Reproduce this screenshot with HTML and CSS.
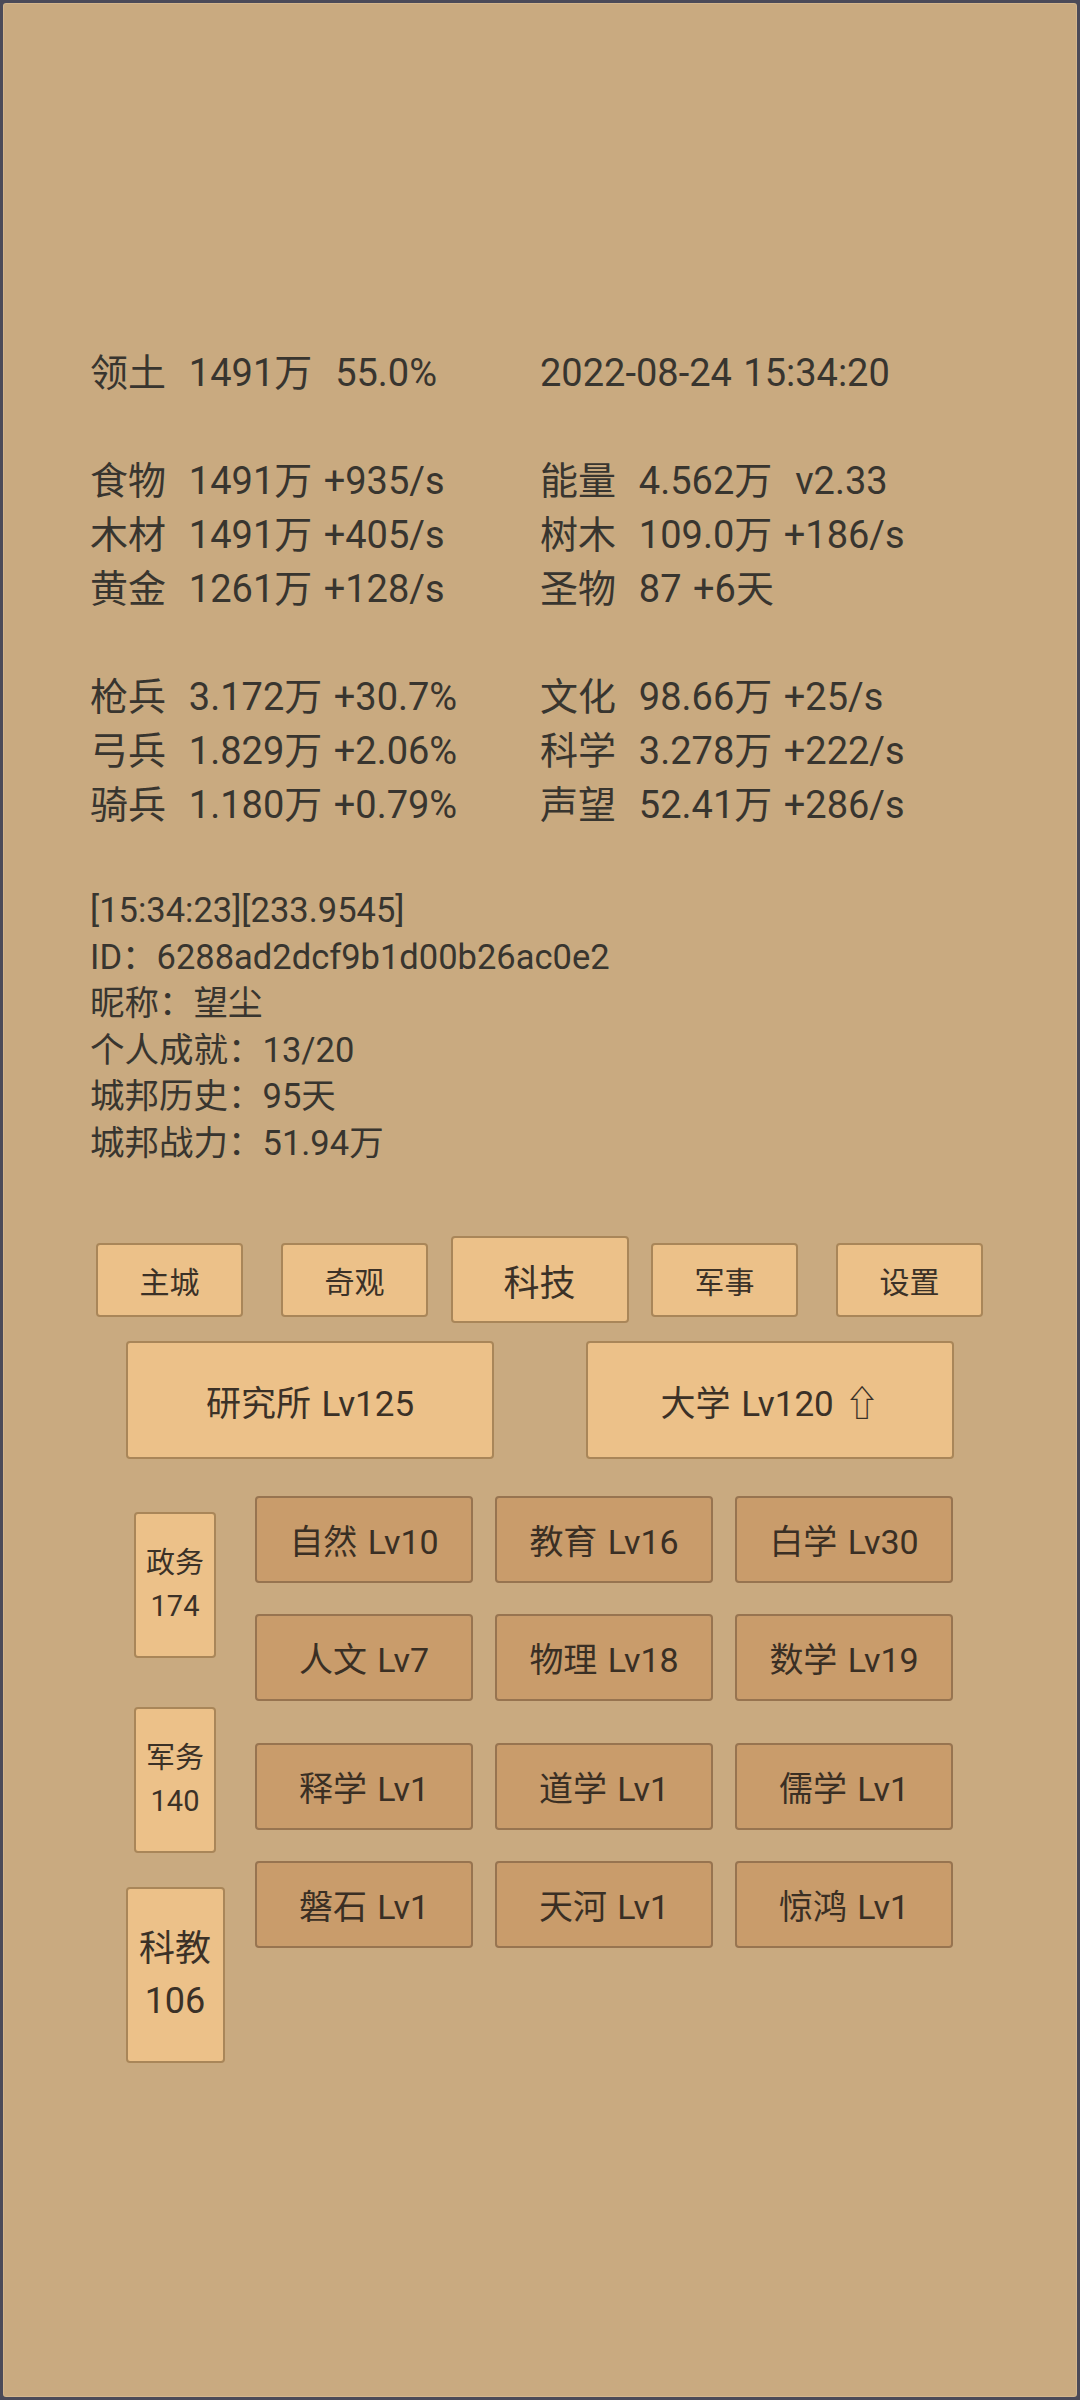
FILE: index.html
```
<!DOCTYPE html>
<html lang="zh-CN">
<head>
    <meta charset="UTF-8">
    <meta name="viewport" content="width=device-width, initial-scale=1.0">
    <title>城邦 - 科技</title>
    <link rel="stylesheet" href="styles.css">
</head>
<body>
    <div id="screen">
        <div id="stats">
            <div class="cell">领土  1491万  55.0%</div>
            <div class="cell">2022-08-24 15:34:20</div>
            <div class="cell"></div>
            <div class="cell"></div>
            <div class="cell">食物  1491万 +935/s</div>
            <div class="cell">能量  4.562万  v2.33</div>
            <div class="cell">木材  1491万 +405/s</div>
            <div class="cell">树木  109.0万 +186/s</div>
            <div class="cell">黄金  1261万 +128/s</div>
            <div class="cell">圣物  87 +6天</div>
            <div class="cell"></div>
            <div class="cell"></div>
            <div class="cell">枪兵  3.172万 +30.7%</div>
            <div class="cell">文化  98.66万 +25/s</div>
            <div class="cell">弓兵  1.829万 +2.06%</div>
            <div class="cell">科学  3.278万 +222/s</div>
            <div class="cell">骑兵  1.180万 +0.79%</div>
            <div class="cell">声望  52.41万 +286/s</div>
        </div>

        <div id="info">
            <div class="line">[15:34:23][233.9545]</div>
            <div class="line">ID：6288ad2dcf9b1d00b26ac0e2</div>
            <div class="line">昵称：望尘</div>
            <div class="line">个人成就：13/20</div>
            <div class="line">城邦历史：95天</div>
            <div class="line">城邦战力：51.94万</div>
        </div>

        <div id="tabs">
            <div class="slot"><div class="btn tab">主城</div></div>
            <div class="slot"><div class="btn tab">奇观</div></div>
            <div class="slot"><div class="btn tab active">科技</div></div>
            <div class="slot"><div class="btn tab">军事</div></div>
            <div class="slot"><div class="btn tab">设置</div></div>
        </div>

        <div id="buildings">
            <div class="slot"><div class="btn building">研究所 Lv125</div></div>
            <div class="slot"><div class="btn building">大学 Lv120 ⇧</div></div>
        </div>

        <div id="science">
            <div class="side">
                <div class="btn post">政务<br>174</div>
                <div class="btn post">军务<br>140</div>
                <div class="btn post big">科教<br>106</div>
            </div>
            <div class="tiles">
                <div class="group">
                    <div class="tile">自然 Lv10</div>
                    <div class="tile">教育 Lv16</div>
                    <div class="tile">白学 Lv30</div>
                    <div class="tile">人文 Lv7</div>
                    <div class="tile">物理 Lv18</div>
                    <div class="tile">数学 Lv19</div>
                </div>
                <div class="group">
                    <div class="tile">释学 Lv1</div>
                    <div class="tile">道学 Lv1</div>
                    <div class="tile">儒学 Lv1</div>
                    <div class="tile">磐石 Lv1</div>
                    <div class="tile">天河 Lv1</div>
                    <div class="tile">惊鸿 Lv1</div>
                </div>
            </div>
        </div>
    </div>
</body>
</html>
```

FILE: styles.css
```
body {
    margin: 0;
    background: #4b4a58;
    font-family: Roboto, "Noto Sans CJK SC", sans-serif;
    color: #38352f;
    word-spacing: 2px;
}
#screen {
    width: 1080px;
    height: 2400px;
    box-sizing: border-box;
    border: 3px solid #4b4a58;
    border-radius: 6px;
    background: #c9aa80;
    box-shadow: inset 0 0 0 1px #d4b68d;
    padding-top: 343px;
    overflow: hidden;
}
#stats {
    display: grid;
    grid-template-columns: 450px 1fr;
    grid-auto-rows: 54px;
    padding-left: 87px;
    font-size: 38px;
    line-height: 54px;
    white-space: pre;
}
#info {
    margin-top: 55px;
    padding-left: 87px;
    font-size: 34.5px;
}
.line {
    height: 46.5px;
    line-height: 46.5px;
    white-space: pre;
}
.btn {
    display: flex;
    align-items: center;
    justify-content: center;
    box-sizing: border-box;
    background: #ecc189;
    border: 2px solid #a98659;
    border-radius: 4px;
    color: #3b3127;
    text-align: center;
}
#tabs {
    display: flex;
    width: 925px;
    height: 87px;
    margin: 70px 0 0 74px;
}
.slot {
    flex: 1;
    display: flex;
    align-items: center;
    justify-content: center;
}
.tab {
    width: 147px;
    height: 74px;
    font-size: 30px;
}
.tab.active {
    width: 178px;
    height: 87px;
    font-size: 36px;
}
#buildings {
    display: flex;
    width: 920px;
    height: 118px;
    margin: 18px 0 0 77px;
}
.building {
    width: 368px;
    height: 118px;
    font-size: 35px;
}
#science {
    display: flex;
    margin-top: 37px;
    padding-left: 122px;
}
.side {
    width: 100px;
    display: flex;
    flex-direction: column;
    align-items: center;
    padding-top: 16px;
}
.post {
    width: 82px;
    height: 146px;
    font-size: 29px;
    line-height: 43px;
}
.post + .post { margin-top: 49px; }
.post.big {
    width: 99px;
    height: 176px;
    margin-top: 34px;
    font-size: 36px;
    line-height: 52px;
}
.tiles {
    margin-left: 30px;
    display: flex;
    flex-direction: column;
    gap: 42px;
}
.group {
    display: grid;
    grid-template-columns: repeat(3, 218px);
    grid-auto-rows: 87px;
    column-gap: 22px;
    row-gap: 31px;
}
.tile {
    display: flex;
    align-items: center;
    justify-content: center;
    background: #c99c6b;
    border: 2px solid #977450;
    border-radius: 4px;
    font-size: 34px;
    color: #3a2f24;
    white-space: pre;
}
```
